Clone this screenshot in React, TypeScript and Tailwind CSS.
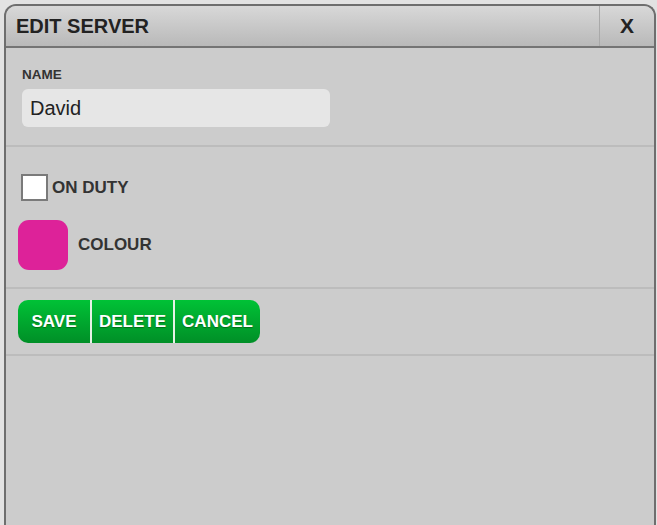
import React from "react";

export default function App() {
  return (
    <div
      className="w-[657px] h-[525px] overflow-hidden bg-[#e2e2e2] pt-[4px] pl-[4px] pr-[1px]"
      style={{ fontFamily: '"Liberation Sans", Arial, sans-serif' }}
    >
      <div className="h-[540px] flex flex-col border-x-2 border-t-2 border-[#6e6e6e] rounded-t-[12px] bg-[#cccccc] overflow-hidden">
        {/* Header */}
        <div className="h-[42px] shrink-0 flex items-stretch bg-gradient-to-b from-[#d8d8d8] to-[#b9b9b9] border-b-2 border-[#747474]">
          <div className="flex-1 flex items-center pl-[10px] text-[20px] font-bold text-[#222]">
            EDIT SERVER
          </div>
          <div className="w-[55px] flex items-center justify-center border-l border-[#a9a9a9] text-[21px] font-bold text-[#222]">
            X
          </div>
        </div>

        {/* Name section */}
        <div className="pt-[19px] pb-[18px] pl-[16px] border-b-2 border-[#bcbcbc]">
          <div className="text-[13.5px] leading-[16px] font-bold text-[#333]">NAME</div>
          <div className="mt-[6px] w-[308px] h-[38px] rounded-[6px] bg-[#e6e6e6] flex items-center pl-[8px] text-[20px] text-[#222]">
            David
          </div>
        </div>

        {/* Options section */}
        <div className="pt-[27px] pb-[17px] pl-[12px] border-b-2 border-[#bcbcbc]">
          <div className="flex items-center pl-[3px]">
            <div className="w-[27px] h-[27px] bg-white border-2 border-[#7a7a7a]" />
            <span className="ml-[4px] text-[17px] font-bold text-[#333]">ON DUTY</span>
          </div>
          <div className="mt-[19px] flex items-center">
            <div className="w-[50px] h-[50px] rounded-[11px] bg-[#dd2299]" />
            <span className="ml-[10px] text-[17px] font-bold text-[#333]">COLOUR</span>
          </div>
        </div>

        {/* Buttons section */}
        <div className="pt-[11px] pb-[11px] pl-[12px] border-b-2 border-[#bcbcbc]">
          <div className="flex w-fit h-[43px] rounded-[10px] overflow-hidden text-white text-[17px] font-bold">
            <div className="w-[72px] flex items-center justify-center bg-gradient-to-b from-[#00c236] to-[#008f27] [text-shadow:0_1px_1px_rgba(0,60,0,0.5)]">
              SAVE
            </div>
            <div className="w-[83px] flex items-center justify-center border-l-2 border-[#e6f2e6] bg-gradient-to-b from-[#00c236] to-[#008f27] [text-shadow:0_1px_1px_rgba(0,60,0,0.5)]">
              DELETE
            </div>
            <div className="w-[87px] flex items-center justify-center border-l-2 border-[#e6f2e6] bg-gradient-to-b from-[#00c236] to-[#008f27] [text-shadow:0_1px_1px_rgba(0,60,0,0.5)]">
              CANCEL
            </div>
          </div>
        </div>

        <div className="flex-1" />
      </div>
    </div>
  );
}
